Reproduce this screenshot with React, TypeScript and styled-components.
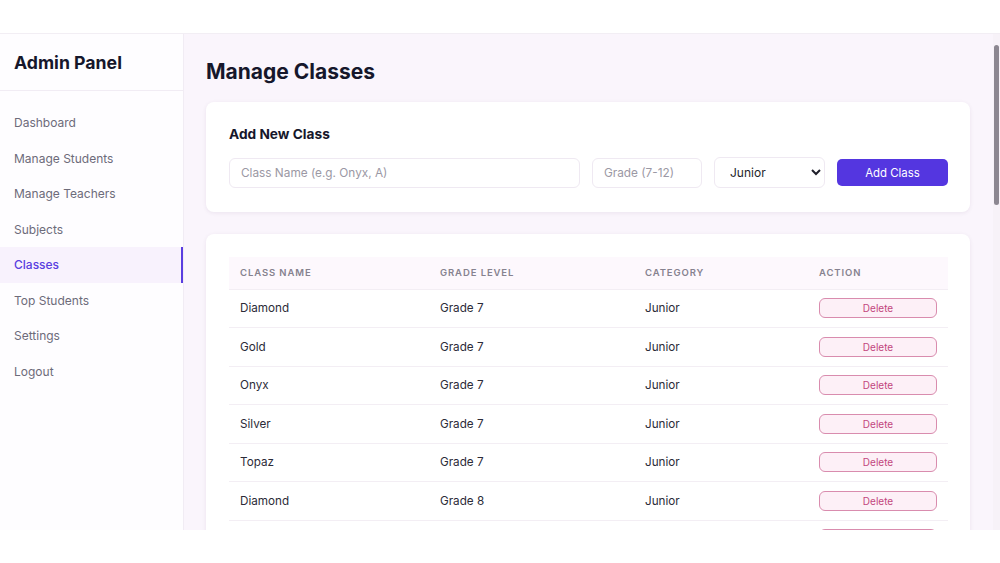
import React, { useState } from "react";
import styled, { createGlobalStyle } from "styled-components";

const GlobalStyle = createGlobalStyle`
  body {
    margin: 0;
    background: #ffffff;
    font-family: Inter, "Noto Sans", "Liberation Sans", sans-serif;
  }
  * { box-sizing: border-box; }
`;

const NAV = [
  "Dashboard",
  "Manage Students",
  "Manage Teachers",
  "Subjects",
  "Classes",
  "Top Students",
  "Settings",
  "Logout",
];

const NAMES = ["Diamond", "Gold", "Onyx", "Silver", "Topaz"];

// grades 7-12, five classes each; only the rows that fit the frame are drawn
const CLASSES = [7, 8, 9, 10, 11, 12]
  .flatMap((grade) =>
    NAMES.map((name) => ({
      name,
      grade,
      category: grade < 10 ? "Junior" : "Senior",
    }))
  )
  .slice(0, 7);

//Styled Components
const Screen = styled.div`
  height: 563px;
  padding-top: 33px;
  background: #ffffff;
  overflow: hidden;
`;
const Frame = styled.div`
  display: flex;
  height: 497px;
  border-top: 1px solid #f2eef4;
  overflow: hidden;
`;
const Sidebar = styled.aside`
  width: 184px;
  flex-shrink: 0;
  background: #fefdff;
  border-right: 1px solid #f1ecf4;
`;
const Brand = styled.div`
  height: 57px;
  display: flex;
  align-items: center;
  padding-left: 14px;
  font-size: 17.7px;
  font-weight: 700;
  color: #16172b;
  border-bottom: 1px solid #f1ecf4;
`;
const Nav = styled.nav`
  display: flex;
  flex-direction: column;
  padding-top: 14px;
`;
const NavItem = styled.div<{ $active?: boolean }>`
  height: 35.5px;
  display: flex;
  align-items: center;
  padding-left: 14px;
  font-size: 12px;
  color: ${(p) => (p.$active ? "#5a3ee0" : "#6d6b7a")};
  font-weight: ${(p) => (p.$active ? 500 : 400)};
  background: ${(p) => (p.$active ? "#f8f2fd" : "transparent")};
  border-right: 2px solid ${(p) => (p.$active ? "#5a3ee0" : "transparent")};
`;
const Main = styled.main`
  flex: 1;
  background: #faf5fc;
  padding: 26px 23px 0 22px;
  overflow: hidden;
`;
const Title = styled.h1`
  margin: 0 0 18px 0;
  font-size: 21px;
  line-height: 24px;
  font-weight: 700;
  color: #16172b;
`;
const Card = styled.section`
  background: #ffffff;
  border-radius: 8px;
  box-shadow: 0 1px 4px rgba(60, 30, 80, 0.08);
  padding: 23px 22px 24px 23px;
  margin-bottom: 22px;
`;
const CardTitle = styled.h2`
  margin: 0 0 14px 0;
  font-size: 13.7px;
  line-height: 18px;
  font-weight: 700;
  color: #16172b;
`;
const FormRow = styled.div`
  display: flex;
  align-items: center;
  gap: 12px;
`;
const Input = styled.input<{ $w: number }>`
  width: ${(p) => p.$w}px;
  height: 30px;
  border: 1px solid #efe9f2;
  border-radius: 6px;
  padding: 0 11px;
  font-family: inherit;
  font-size: 11.8px;
  color: #222;
  background: #ffffff;
  outline: none;
  &::placeholder {
    color: #9b98a4;
  }
`;
const Select = styled.select`
  width: 111px;
  height: 31px;
  border: 1px solid #efe9f2;
  border-radius: 6px;
  padding: 0 8px 0 11px;
  font-family: inherit;
  font-size: 12px;
  color: #1f1f2a;
  background: #ffffff;
  outline: none;
`;
const AddButton = styled.button`
  width: 111px;
  height: 27px;
  border: none;
  border-radius: 5px;
  background: #5436e0;
  color: #ffffff;
  font-family: inherit;
  font-size: 11.4px;
`;
const TableCard = styled(Card)`
  padding-bottom: 0;
  margin-bottom: 0;
  border-radius: 8px 8px 0 0;
`;
const Table = styled.table`
  width: 100%;
  border-collapse: collapse;
  table-layout: fixed;
`;
const TH = styled.th<{ $w?: number }>`
  width: ${(p) => (p.$w ? `${p.$w}px` : "auto")};
  height: 32px;
  padding: 0 11px;
  text-align: left;
  font-size: 9.5px;
  font-weight: 600;
  letter-spacing: 0.9px;
  color: #86828f;
  background: #fdf8fd;
  border-bottom: 1px solid #f3eef4;
`;
const TD = styled.td`
  height: 38.5px;
  padding: 0 11px;
  font-size: 11.7px;
  color: #2c2b38;
  border-bottom: 1px solid #f3eef4;
`;
const DeleteButton = styled.button`
  width: 118px;
  height: 20px;
  border: 1.5px solid #d98cae;
  border-radius: 6px;
  background: #fdf0f7;
  color: #c2467d;
  font-family: inherit;
  font-size: 10px;
  padding: 0;
`;
const ScrollTrack = styled.div`
  width: 7px;
  flex-shrink: 0;
  background: #f7f2f8;
  padding: 11px 1px 0 1px;
`;
const ScrollThumb = styled.div`
  height: 160px;
  border-radius: 3px;
  background: #8c8791;
`;

const App = () => {
  const [category, setCategory] = useState("Junior");

  return (
    <>
      <GlobalStyle />
      <Screen>
        <Frame>
          <Sidebar>
            <Brand>Admin Panel</Brand>
            <Nav>
              {NAV.map((item) => (
                <NavItem key={item} $active={item === "Classes"}>
                  {item}
                </NavItem>
              ))}
            </Nav>
          </Sidebar>
          <Main>
            <Title>Manage Classes</Title>
            <Card>
              <CardTitle>Add New Class</CardTitle>
              <FormRow>
                <Input $w={351} placeholder="Class Name (e.g. Onyx, A)" />
                <Input $w={110} placeholder="Grade (7-12)" />
                <Select
                  value={category}
                  onChange={(e) => setCategory(e.target.value)}
                >
                  <option>Junior</option>
                  <option>Senior</option>
                </Select>
                <AddButton>Add Class</AddButton>
              </FormRow>
            </Card>
            <TableCard>
              <Table>
                <thead>
                  <tr>
                    <TH $w={200}>CLASS NAME</TH>
                    <TH $w={205}>GRADE LEVEL</TH>
                    <TH $w={174}>CATEGORY</TH>
                    <TH>ACTION</TH>
                  </tr>
                </thead>
                <tbody>
                  {CLASSES.map((c, index) => (
                    <tr key={`row-${index}`}>
                      <TD>{c.name}</TD>
                      <TD>Grade {c.grade}</TD>
                      <TD>{c.category}</TD>
                      <TD>
                        <DeleteButton>Delete</DeleteButton>
                      </TD>
                    </tr>
                  ))}
                </tbody>
              </Table>
            </TableCard>
          </Main>
          <ScrollTrack>
            <ScrollThumb />
          </ScrollTrack>
        </Frame>
      </Screen>
    </>
  );
};

export default App;
